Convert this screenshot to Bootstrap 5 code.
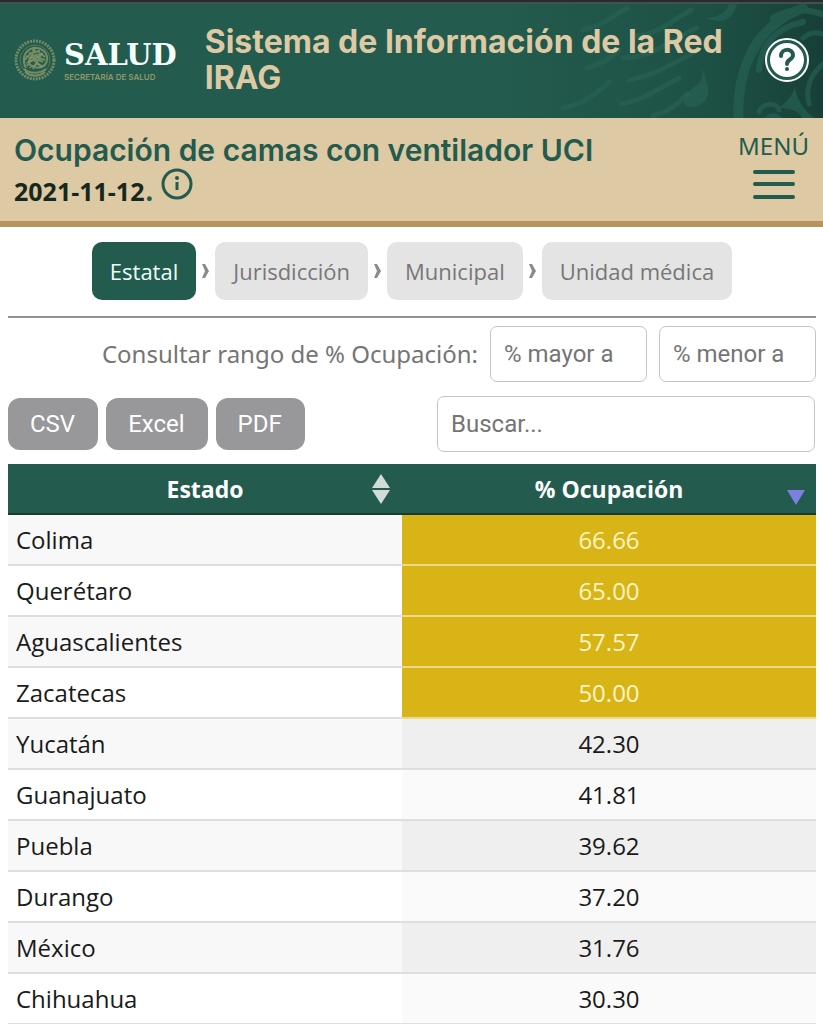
<!DOCTYPE html>
<html lang="es">
<head>
<meta charset="utf-8">
<meta name="viewport" content="width=device-width, initial-scale=1">
<title>Sistema de Información de la Red IRAG</title>
<link href="https://cdn.jsdelivr.net/npm/bootstrap@5.3.0/dist/css/bootstrap.min.css" rel="stylesheet">
<style>
  :root { --verde: #235b4e; --arena: #ddc9a3; --gris: #757575; }
  body { font-family: "Open Sans", sans-serif; font-size: 24px; line-height: 32px; color: #1a1a1a; background: #fff; overflow-x: hidden; }
  .site-head { background: var(--verde); border-top: 2px solid #272d2e; box-shadow: inset 0 2px #42514d; min-height: 118px; }
  .head-art { top: 2px; right: 0; width: 320px; height: 100%; }
  .edge { padding-left: 14px; padding-right: 14px; }
  .brand-name { font: bold 29px/34px "DejaVu Serif", serif; color: #f4fffb; }
  .brand-sub { font: 600 8px/10px Inter, sans-serif; color: #8f9a68; }
  .site-title { font: 700 32px/36px Inter, sans-serif; color: var(--arena); }
  .title-bar { background: var(--arena); border-bottom: 6px solid #b8945c; min-height: 109px; color: var(--verde); }
  .page-title { font: 600 30px/40px Inter, sans-serif; }
  .page-title time { color: #17291f; font-family: "Open Sans", sans-serif; font-size: 25px; font-weight: 700; }
  .bare { background: none; border: 0; padding: 0; color: inherit; }
  .info-btn { margin-top: -2px; }
  .menu-btn { padding-top: 6px; font-family: "Noto Sans", sans-serif; }
  .menu-word { line-height: 28px; }
  .levels { padding: 15px 0 16px; }
  .level { font-size: 22px; line-height: 30px; padding: 14px 18px; border: 0; border-radius: 10px; background: #e4e4e4; color: #777; }
  .level:hover { background: #d8d8d8; color: #666; }
  .level.active, .level.active:hover { background: var(--verde); color: #f0fffa; }
  .sheet { padding: 0 7px 0 8px; }
  .rule { border-top: 2px solid #929292; }
  .range-label { color: var(--gris); font-family: "Noto Sans", sans-serif; }
  .field { font-family: Roboto, sans-serif; font-size: 24px; line-height: 32px; padding: 11px 13px; border: 1px solid #c4c4c4; border-radius: 7px; height: 56px; }
  .field::placeholder { color: var(--gris); }
  .field-range { width: 157px; }
  .field-search { width: 378px; }
  .tools { padding: 14px 1px 12px 0; }
  .export { font-family: Roboto, sans-serif; font-size: 24px; line-height: 32px; padding: 10px 23px 10px 22px; border: 0; border-radius: 12px; background: #98989a; color: #fff; }
  .export:hover { background: #858587; color: #fff; }
  .beds { table-layout: fixed; }
  .beds th { height: 50px; padding: 0 8px; background: var(--verde); color: #fff; border-bottom: 2px solid #183a31; font-size: 23px; font-weight: 700; position: relative; text-align: center; }
  .beds th svg { position: absolute; right: 11px; top: 8px; }
  .beds td { height: 51px; padding: 0 8px; border-bottom: 2px solid #dedede; color: #1a1a1a; }
  .beds .col-state { width: 394px; }
  .beds tbody tr:nth-child(odd) td { background: #f8f8f8; }
  .beds tbody tr:nth-child(odd) td + td { background: #efefef; }
  .beds tbody tr:nth-child(even) td + td { background: #fafafa; }
  .beds tbody tr.alert-mid td + td { background: #d8b416; color: #fbf4c4; border-bottom-color: #ecd98a; }
</style>
</head>
<body>
<header class="site-head position-relative overflow-hidden d-flex align-items-center">
  <svg class="head-art position-absolute" viewBox="0 0 320 116" preserveAspectRatio="xMaxYMid slice" aria-hidden="true">
    <defs><linearGradient id="shade"><stop offset="0" stop-color="#1b4b40" stop-opacity="0"/><stop offset=".6" stop-color="#1b4b40" stop-opacity=".6"/><stop offset="1" stop-color="#173f37"/></linearGradient></defs>
    <path fill="url(#shade)" d="M0 0h320v116H0z"/>
    <g fill="none" stroke="#286457" stroke-width="5" opacity=".6" stroke-linecap="round">
      <path stroke-width="10" d="M236 122C232 76 246 24 300 4"/>
      <path stroke-width="6" d="M256 66c2-24 16-42 44-48M270 14c16-10 34-10 54-2"/>
      <path d="M130 32c24 0 36-14 58-26M120 54c32 0 50-20 74-30M126 76c26-4 46-18 66-28M118 100c24-4 38-16 58-26M150 112c14-4 26-12 34-22M80 26c20-4 30-14 44-22M60 104c20-4 34-14 46-26M84 64c14-4 24-10 32-18"/>
      <path d="M256 108c4-10 18-10 20-2M262 118c2-6 10-8 14-4M306 100c-4-16 2-30 14-40M300 34c8-6 12-6 20-4"/>
    </g>
    <g fill="#286457" opacity=".6"><path d="M194 54c8 12 8 22-4 30-8 6-10 10-8 18 14 4 28-6 22-22-2-10-6-20-10-26zM226 0c-2 8-12 14-24 14 14 6 28 4 32-14zM290 72c4 14 0 20-14 32 16 0 22 6 24 12h14c-12-8-22-20-24-44z"/></g>
  </svg>
  <div class="edge w-100 position-relative d-flex align-items-center">
    <a href="#" class="d-flex align-items-center gap-2 text-decoration-none flex-shrink-0" aria-label="Secretaría de Salud">
      <svg width="42" height="46" viewBox="0 0 42 46" fill="none" stroke="#899767" aria-hidden="true">
        <circle cx="21" cy="23" r="19" stroke-width="3" stroke-dasharray="2 1" opacity=".8"/>
        <circle cx="21" cy="23" r="15" stroke-width="1" opacity=".5"/>
        <path stroke-width="2" opacity=".8" d="M12 31c-5-9-1-18 7-20 8-1 15 4 14 12-1 6-6 9-12 7-6-1-8-6-4-10 4-3 9-1 9 3M10 24c4-6 8-10 16-10M13 29c4-7 9-8 16-4M15 15l12 15M21 11l-7 17M28 16l-9 16M10 32c6 5 15 5 22 0M11 35c6 5 14 5 20 0M23 14l8 6M17 18l14 5"/>
        <path stroke-width="1" d="M12 19l9 3 8-6M12 26l7-3 9 8M18 12l5 6 6-1M15 31l8-4 7 2"/>
      </svg>
      <span class="d-flex flex-column"><span class="brand-name">SALUD</span><span class="brand-sub">SECRETARÍA DE SALUD</span></span>
    </a>
    <h1 class="site-title mb-0 ms-4 ps-1 flex-grow-1">Sistema de Información de la Red IRAG</h1>
    <button type="button" class="bare flex-shrink-0 d-flex" aria-label="Ayuda">
      <svg width="44" height="44" viewBox="0 0 44 44" aria-hidden="true"><circle cx="22" cy="22" r="21" fill="#235b4e" stroke="#fff" stroke-width="2"/><circle cx="22" cy="22" r="17" fill="#fff"/><path d="M16 18c0-8 12-8 12-1 0 5-6 4-6 9" fill="none" stroke="#235b4e" stroke-width="4" stroke-linecap="round"/><circle cx="22" cy="31" r="2" fill="#235b4e"/></svg>
    </button>
  </div>
</header>

<div class="title-bar edge d-flex justify-content-between align-items-start pt-2">
  <h2 class="page-title mb-0 pt-1">Ocupación de camas con ventilador UCI<br><time datetime="2021-11-12">2021-11-12</time>.
    <button type="button" class="bare info-btn align-top" aria-label="Información"><svg class="d-block" width="32" height="32" viewBox="0 0 32 32" aria-hidden="true"><circle cx="16" cy="16" r="14" fill="none" stroke="currentColor" stroke-width="3"/><path d="M16 14v8" stroke="currentColor" stroke-width="3"/><circle cx="16" cy="10" r="2" fill="currentColor"/></svg></button>
  </h2>
  <button type="button" class="bare menu-btn d-flex flex-column align-items-center">
    <span class="menu-word">MENÚ</span>
    <svg class="mt-2" width="42" height="32" viewBox="0 0 42 32" stroke="currentColor" stroke-width="4" stroke-linecap="round" aria-hidden="true"><path d="M2 4h38M2 16h38M2 29h38"/></svg>
  </button>
</div>

<main class="sheet">
  <nav class="levels d-flex justify-content-center align-items-center" aria-label="Nivel">
    <a href="#" class="btn level active" aria-current="page">Estatal</a>
    <svg class="mx-1" width="11" height="18" viewBox="0 0 11 18" aria-hidden="true"><path d="M2 2h3l4 7-4 7H2l3-7z" fill="#8b8b8b"/></svg>
    <a href="#" class="btn level">Jurisdicción</a>
    <svg class="mx-1" width="11" height="18" viewBox="0 0 11 18" aria-hidden="true"><path d="M2 2h3l4 7-4 7H2l3-7z" fill="#8b8b8b"/></svg>
    <a href="#" class="btn level">Municipal</a>
    <svg class="mx-1" width="11" height="18" viewBox="0 0 11 18" aria-hidden="true"><path d="M2 2h3l4 7-4 7H2l3-7z" fill="#8b8b8b"/></svg>
    <a href="#" class="btn level">Unidad médica</a>
  </nav>
  <div class="rule"></div>
  <form class="d-flex justify-content-end align-items-center pt-2">
    <label class="range-label me-2 pe-1" for="mayor">Consultar rango de % Ocupación:</label>
    <input id="mayor" class="form-control field field-range me-2" type="text" placeholder="% mayor a">
    <input id="menor" class="form-control field field-range ms-1" type="text" placeholder="% menor a" aria-label="% menor a">
  </form>
  <div class="tools d-flex justify-content-between align-items-center">
    <div class="d-flex gap-2">
      <button type="button" class="btn export">CSV</button>
      <button type="button" class="btn export">Excel</button>
      <button type="button" class="btn export">PDF</button>
    </div>
    <input class="form-control field field-search" type="search" placeholder="Buscar..." aria-label="Buscar">
  </div>
  <table class="beds w-100">
    <thead><tr>
      <th class="col-state" scope="col">Estado<svg width="20" height="34" viewBox="0 0 20 34" aria-hidden="true"><path d="M10 2l9 14H1zM10 32l9-14H1z" fill="#d3dbd8"/></svg></th>
      <th scope="col" aria-sort="descending">% Ocupación<svg width="18" height="34" viewBox="0 0 18 34" aria-hidden="true"><path d="M9 33L0 18h18z" fill="#7d7fe0"/></svg></th>
    </tr></thead>
    <tbody>
      <tr class="alert-mid"><td>Colima</td><td class="text-center">66.66</td></tr>
      <tr class="alert-mid"><td>Querétaro</td><td class="text-center">65.00</td></tr>
      <tr class="alert-mid"><td>Aguascalientes</td><td class="text-center">57.57</td></tr>
      <tr class="alert-mid"><td>Zacatecas</td><td class="text-center">50.00</td></tr>
      <tr><td>Yucatán</td><td class="text-center">42.30</td></tr>
      <tr><td>Guanajuato</td><td class="text-center">41.81</td></tr>
      <tr><td>Puebla</td><td class="text-center">39.62</td></tr>
      <tr><td>Durango</td><td class="text-center">37.20</td></tr>
      <tr><td>México</td><td class="text-center">31.76</td></tr>
      <tr><td>Chihuahua</td><td class="text-center">30.30</td></tr>
    </tbody>
  </table>
</main>
<script src="https://cdn.jsdelivr.net/npm/bootstrap@5.3.0/dist/js/bootstrap.bundle.min.js"></script>
</body>
</html>
